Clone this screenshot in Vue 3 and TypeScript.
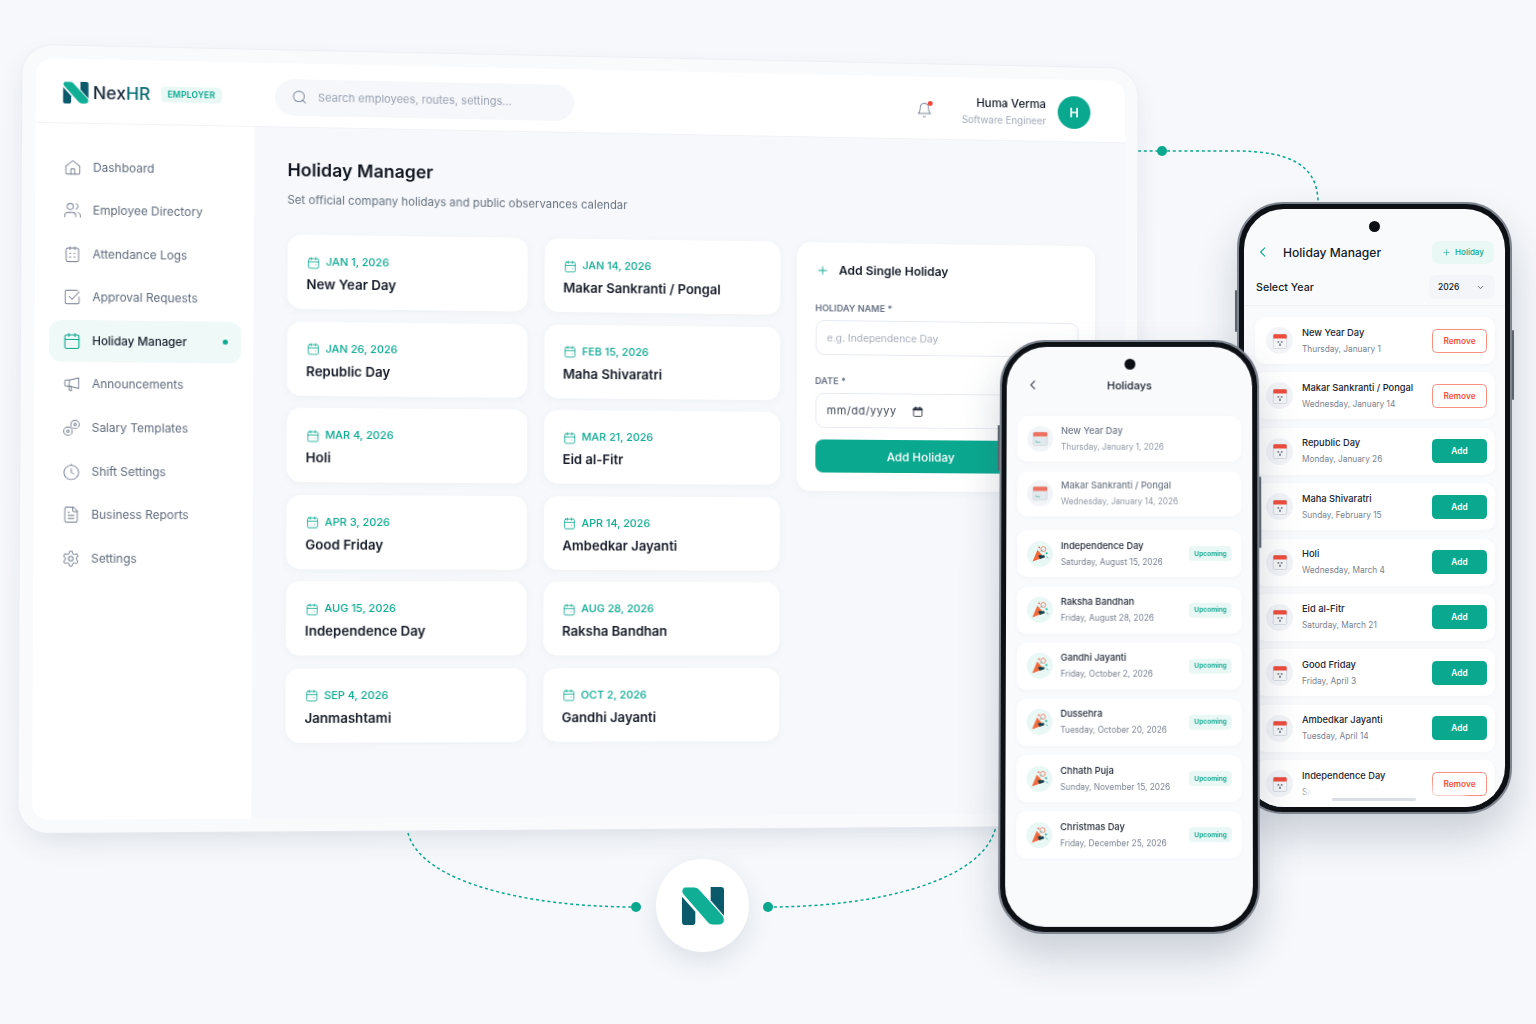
<template>
  <div class="canvas">
    <!-- dashed connectors sit under everything -->
    <svg class="links" width="1536" height="1024" viewBox="0 0 1536 1024" fill="none">
      <path class="dash" d="M1138 151H1235C1290 151 1318 165 1318 203" />
      <path class="dash" d="M408 833C420 880 520 907 636 907" />
      <path class="dash" d="M768 907C880 907 985 880 996 826" />
      <circle cx="1162" cy="151" r="5" fill="#0aa88f" />
      <circle cx="636" cy="907" r="5" fill="#0aa88f" />
      <circle cx="768" cy="907" r="5" fill="#0aa88f" />
    </svg>

    <div class="desk" :style="{ transform: deskMatrix }">
      <header class="topbar">
        <div class="brand">
          <svg class="logo" viewBox="0 0 41 37">
            <path d="M0 9.5 13 24V34a3 3 0 0 1-3 3H3a3 3 0 0 1-3-3Z" fill="#0a5a6b" />
            <path d="M28 0h10a3 3 0 0 1 3 3V28L28 13Z" fill="#0a5a6b" />
            <path d="M3 0H12Q15 0 17 2.500L40 28Q42 31 41 34 39.500 37 36 37H30Q27 37 25 34.500L1 7Q-1 4.500 .5 2 1.500 0 3 0Z" fill="#0fae95" stroke="#fff" stroke-width=".8" />
          </svg>
          <span class="brand-name">Nex<b>HR</b></span>
          <span class="role">EMPLOYER</span>
        </div>
        <div class="search">
          <svg class="ico" viewBox="0 0 24 24" v-html="icons.search" />
          <span>Search employees, routes, settings...</span>
        </div>
        <div class="spacer" />
        <div class="bell">
          <svg class="ico" viewBox="0 0 24 24" v-html="icons.bell" />
          <i />
        </div>
        <div class="who">
          <strong>Huma Verma</strong>
          <small>Software Engineer</small>
        </div>
        <div class="avatar">H</div>
      </header>

      <div class="body">
        <nav class="side">
          <a v-for="item in nav" :key="item.label" class="nav-item" :class="{ on: item.active }">
            <svg class="ico" viewBox="0 0 24 24" v-html="icons[item.icon]" />
            <span>{{ item.label }}</span>
            <i v-if="item.active" />
          </a>
        </nav>

        <main class="main">
          <h1>Holiday Manager</h1>
          <p class="sub">Set official company holidays and public observances calendar</p>
          <div class="columns">
            <div class="cards">
              <div v-for="card in cards" :key="card.name" class="card">
                <div class="when">
                  <svg class="ico" viewBox="0 0 24 24" v-html="icons.calendarDot" />
                  {{ card.date }}
                </div>
                <div class="name">{{ card.name }}</div>
              </div>
            </div>
            <section class="form">
              <h2>
                <svg class="ico" viewBox="0 0 24 24" v-html="icons.plus" />
                Add Single Holiday
              </h2>
              <label>HOLIDAY NAME *</label>
              <div class="field ghost">e.g. Independence Day</div>
              <label class="second">DATE *</label>
              <div class="field date">
                mm/dd/yyyy
                <svg viewBox="0 0 24 24" class="ico" v-html="icons.calendarFill" />
              </div>
              <button class="submit">Add Holiday</button>
            </section>
          </div>
        </main>
      </div>
    </div>

    <!-- back phone: manager -->
    <div class="phone p2">
      <span class="key k1" /><span class="key k2" />
      <div class="screen">
        <span class="cam" />
        <div class="p2-head">
          <svg class="ico back" viewBox="0 0 24 24"><path d="m15 5-7 7 7 7" /></svg>
          <span class="p-title">Holiday Manager</span>
          <span class="add-chip">
            <svg class="ico" viewBox="0 0 24 24" v-html="icons.plus" />
            Holiday
          </span>
        </div>
        <div class="year-row">
          <span>Select Year</span>
          <span class="year">2026
            <svg class="ico" viewBox="0 0 24 24"><path d="m6 9 6 6 6-6" /></svg>
          </span>
        </div>
        <div class="p2-list">
          <div v-for="row in managerRows" :key="row.name" class="row">
            <span class="bubble grey">
              <svg viewBox="0 0 24 24" class="emoji">
                <rect x="4" y="4" width="16" height="17" rx="1.500" fill="#f4f5f6" stroke="#c9ced4" stroke-width=".8" />
                <path d="M4 9V5.500A1.500 1.500 0 0 1 5.500 4h13A1.500 1.500 0 0 1 20 5.500V9Z" fill="#ee4b3a" />
                <path d="M9 12h2v2H9zm4 0h2v2h-2zm-2 3h2v3h-2z" fill="#7d8792" />
              </svg>
            </span>
            <span class="txt">
              <b>{{ row.name }}</b>
              <small>{{ row.date }}</small>
            </span>
            <button :class="row.added ? 'btn-remove' : 'btn-add'">{{ row.added ? 'Remove' : 'Add' }}</button>
          </div>
        </div>
        <span class="fade" />
        <span class="fade low" />
        <span class="home-bar" />
      </div>
    </div>

    <!-- front phone: employee list -->
    <div class="phone p1" :style="{ transform: phoneMatrix }">
      <span class="key k3" /><span class="key k4" />
      <div class="screen">
        <span class="cam" />
        <div class="p1-head">
          <svg class="ico back" viewBox="0 0 24 24"><path d="m15 5-7 7 7 7" /></svg>
          Holidays
        </div>
        <div class="p1-list">
          <div v-for="row in employeeRows" :key="row.name" class="row" :class="{ past: row.past }">
            <span class="bubble" :class="row.past ? 'grey' : 'mint'">
              <svg v-if="row.past" viewBox="0 0 24 24" class="emoji">
                <rect x="3.500" y="4" width="17" height="16" rx="1.500" fill="#dfe8ec" stroke="#c6d0d6" stroke-width=".8" />
                <path d="M3.500 9V5.500A1.500 1.500 0 0 1 5 4h14a1.500 1.500 0 0 1 1.500 1.500V9Z" fill="#ee5a46" />
                <path d="M7 14v2h5" fill="none" stroke="#4fb3a2" stroke-width="1" />
              </svg>
              <svg v-else viewBox="0 0 24 24" class="emoji">
                <path d="M3 21 9 7l8 9Z" fill="#f2693c" />
                <path d="M10 14c3-2 4 1 7-1l1 3-6 2Z" fill="#12404f" />
                <circle cx="16" cy="6" r="3" fill="none" stroke="#ef8a78" stroke-width="1.200" />
                <circle cx="20" cy="11" r="1.200" fill="#0fae95" />
                <circle cx="11" cy="4" r="1" fill="#ee4b3a" />
                <path d="M20 15l2 2M13 9l2-2" stroke="#0fae95" stroke-width="1" />
              </svg>
            </span>
            <span class="txt">
              <b>{{ row.name }}</b>
              <small>{{ row.date }}</small>
            </span>
            <span v-if="!row.past" class="soon">Upcoming</span>
          </div>
        </div>
      </div>
    </div>

    <div class="badge">
      <svg viewBox="0 0 41 37">
        <path d="M0 9.500 13 24V34a3 3 0 0 1-3 3H3a3 3 0 0 1-3-3Z" fill="#0a5a6b" />
        <path d="M28 0h10a3 3 0 0 1 3 3V28L28 13Z" fill="#0a5a6b" />
        <path d="M3 0H12Q15 0 17 2.500L40 28Q42 31 41 34 39.500 37 36 37H30Q27 37 25 34.500L1 7Q-1 4.500 .5 2 1.500 0 3 0Z" fill="#0fae95" stroke="#fff" stroke-width=".8" />
      </svg>
    </div>
  </div>
</template>

<script setup lang="ts">
type Pt = [number, number];

// css matrix for a w x h box whose corners land on the four points (tl, tr, br, bl)
function warp(w: number, h: number, q: Pt[]): string {
  const [[x0, y0], [x1, y1], [x2, y2], [x3, y3]] = q;
  const dx1 = x1 - x2, dx2 = x3 - x2, sx = x0 - x1 + x2 - x3;
  const dy1 = y1 - y2, dy2 = y3 - y2, sy = y0 - y1 + y2 - y3;
  const den = dx1 * dy2 - dx2 * dy1;
  const g = (sx * dy2 - dx2 * sy) / den;
  const k = (dx1 * sy - sx * dy1) / den;
  const a = x1 - x0 + g * x1, b = x3 - x0 + k * x3;
  const d = y1 - y0 + g * y1, e = y3 - y0 + k * y3;
  return `matrix3d(${a / w},${d / w},0,${g / w},${b / h},${e / h},0,${k / h},0,0,1,0,${x0},${y0},0,1)`;
}

const deskMatrix = warp(1090, 762, [[36, 58], [1125, 81], [1124, 813], [32, 820]]);
const phoneMatrix = warp(262, 595, [[1000, 340], [1259, 340], [1260, 934], [998, 934]]);

const icons: Record<string, string> = {
  search: '<circle cx="11" cy="11" r="8"/><path d="m21 21-4.300-4.300"/>',
  bell: '<path d="M6 8a6 6 0 0 1 12 0c0 7 3 9 3 9H3s3-2 3-9"/><path d="M10.300 21a1.940 1.940 0 0 0 3.400 0"/>',
  plus: '<path d="M5 12h14M12 5v14"/>',
  home: '<path d="M3 10.500 12 3l9 7.500V19a2 2 0 0 1-2 2H5a2 2 0 0 1-2-2Z"/><path d="M9.500 21v-6a1 1 0 0 1 1-1h3a1 1 0 0 1 1 1v6"/>',
  users: '<path d="M16 21v-2a4 4 0 0 0-4-4H6a4 4 0 0 0-4 4v2"/><circle cx="9" cy="7" r="4"/><path d="M22 21v-2a4 4 0 0 0-3-3.870"/><path d="M16 3.130a4 4 0 0 1 0 7.750"/>',
  sheet: '<rect x="4" y="4" width="16" height="18" rx="2"/><path d="M9 2v4M15 2v4M8.500 11h1.500M14 11h1.500M8.500 16h1.500M14 16h1.500"/>',
  approve: '<path d="M21 11.500V19a2 2 0 0 1-2 2H5a2 2 0 0 1-2-2V5a2 2 0 0 1 2-2h14"/><path d="m8 11 4 4 9-10"/>',
  calendar: '<rect x="3" y="4" width="18" height="18" rx="2"/><path d="M16 2v4M8 2v4M3 10h18"/>',
  calendarDot: '<rect x="3" y="4" width="18" height="18" rx="2"/><path d="M16 2v4M8 2v4M3 10h18M16 16h.01"/>',
  calendarFill: '<rect x="4" y="5" width="16" height="16" rx="2"/><path d="M8 3v4M16 3v4"/><path d="M4 9h16V7H4Z" fill="currentColor"/>',
  megaphone: '<path d="M21 4v14L9 15H5a2 2 0 0 1-2-2V9a2 2 0 0 1 2-2h4Z"/><path d="M9 7v8M8 15l1 6h3l-1-5.500"/>',
  salary: '<circle cx="7.500" cy="16.500" r="5.500"/><circle cx="7.500" cy="16.500" r="1.500"/><circle cx="16.500" cy="7.500" r="5.500"/><circle cx="16.500" cy="7.500" r="1.500"/>',
  clock: '<circle cx="12" cy="13" r="9.500"/><path d="M12 1.500v2M12 7.500V13l3.500 2"/>',
  report: '<path d="M15 2H6a2 2 0 0 0-2 2v16a2 2 0 0 0 2 2h12a2 2 0 0 0 2-2V7Z"/><path d="M14 2v4a2 2 0 0 0 2 2h4"/><path d="M8 13h8M8 17h8M8 9h2"/>',
  settings: '<path d="M12.220 2h-.440a2 2 0 0 0-2 2v.180a2 2 0 0 1-1 1.730l-.430.250a2 2 0 0 1-2 0l-.150-.080a2 2 0 0 0-2.730.730l-.220.380a2 2 0 0 0 .730 2.730l.150.100a2 2 0 0 1 1 1.720v.510a2 2 0 0 1-1 1.740l-.150.090a2 2 0 0 0-.730 2.730l.220.380a2 2 0 0 0 2.730.730l.150-.080a2 2 0 0 1 2 0l.430.250a2 2 0 0 1 1 1.730V20a2 2 0 0 0 2 2h.440a2 2 0 0 0 2-2v-.180a2 2 0 0 1 1-1.730l.430-.250a2 2 0 0 1 2 0l.150.080a2 2 0 0 0 2.730-.730l.220-.390a2 2 0 0 0-.730-2.730l-.150-.080a2 2 0 0 1-1-1.740v-.500a2 2 0 0 1 1-1.740l.150-.090a2 2 0 0 0 .730-2.730l-.220-.380a2 2 0 0 0-2.730-.730l-.150.080a2 2 0 0 1-2 0l-.430-.250a2 2 0 0 1-1-1.730V4a2 2 0 0 0-2-2z"/><circle cx="12" cy="12" r="3"/>',
};

const nav = [
  { label: 'Dashboard', icon: 'home' },
  { label: 'Employee Directory', icon: 'users' },
  { label: 'Attendance Logs', icon: 'sheet' },
  { label: 'Approval Requests', icon: 'approve' },
  { label: 'Holiday Manager', icon: 'calendar', active: true },
  { label: 'Announcements', icon: 'megaphone' },
  { label: 'Salary Templates', icon: 'salary' },
  { label: 'Shift Settings', icon: 'clock' },
  { label: 'Business Reports', icon: 'report' },
  { label: 'Settings', icon: 'settings' },
];

const cards = [
  { date: 'JAN 1, 2026', name: 'New Year Day' },
  { date: 'JAN 14, 2026', name: 'Makar Sankranti / Pongal' },
  { date: 'JAN 26, 2026', name: 'Republic Day' },
  { date: 'FEB 15, 2026', name: 'Maha Shivaratri' },
  { date: 'MAR 4, 2026', name: 'Holi' },
  { date: 'MAR 21, 2026', name: 'Eid al-Fitr' },
  { date: 'APR 3, 2026', name: 'Good Friday' },
  { date: 'APR 14, 2026', name: 'Ambedkar Jayanti' },
  { date: 'AUG 15, 2026', name: 'Independence Day' },
  { date: 'AUG 28, 2026', name: 'Raksha Bandhan' },
  { date: 'SEP 4, 2026', name: 'Janmashtami' },
  { date: 'OCT 2, 2026', name: 'Gandhi Jayanti' },
];

const employeeRows = [
  { name: 'New Year Day', date: 'Thursday, January 1, 2026', past: true },
  { name: 'Makar Sankranti / Pongal', date: 'Wednesday, January 14, 2026', past: true },
  { name: 'Independence Day', date: 'Saturday, August 15, 2026' },
  { name: 'Raksha Bandhan', date: 'Friday, August 28, 2026' },
  { name: 'Gandhi Jayanti', date: 'Friday, October 2, 2026' },
  { name: 'Dussehra', date: 'Tuesday, October 20, 2026' },
  { name: 'Chhath Puja', date: 'Sunday, November 15, 2026' },
  { name: 'Christmas Day', date: 'Friday, December 25, 2026' },
];

const managerRows = [
  { name: 'New Year Day', date: 'Thursday, January 1', added: true },
  { name: 'Makar Sankranti / Pongal', date: 'Wednesday, January 14', added: true },
  { name: 'Republic Day', date: 'Monday, January 26' },
  { name: 'Maha Shivaratri', date: 'Sunday, February 15' },
  { name: 'Holi', date: 'Wednesday, March 4' },
  { name: 'Eid al-Fitr', date: 'Saturday, March 21' },
  { name: 'Good Friday', date: 'Friday, April 3' },
  { name: 'Ambedkar Jayanti', date: 'Tuesday, April 14' },
  { name: 'Independence Day', date: 'Saturday, August 15', added: true },
];
</script>

<style>
*, *::before, *::after {
  box-sizing: border-box;
}
</style>

<style scoped>
.canvas {
  position: relative;
  width: 1536px;
  height: 1024px;
  overflow: hidden;
  background: #f6f8fb;
  font-family: Inter, "Noto Sans", sans-serif;
  color: #141b27;
}

.links {
  position: absolute;
  left: 0;
  top: 0;
}

.dash {
  stroke: #0aa88f;
  stroke-width: 1.5;
  stroke-dasharray: 3 2.800;
}

.ico {
  fill: none;
  stroke: currentColor;
  stroke-width: 1.5;
  stroke-linecap: round;
  stroke-linejoin: round;
  flex: none;
}

/* desktop window, warped onto its corners from the script */
.desk {
  position: absolute;
  left: 0;
  top: 0;
  width: 1090px;
  height: 762px;
  transform-origin: 0 0;
  display: flex;
  flex-direction: column;
  background: #f6f8fb;
  border-radius: 16px;
  overflow: hidden;
  box-shadow: 0 0 0 13px #f9fafc, 0 0 0 14px rgba(232, 235, 241, 0.6), 0 12px 30px 6px rgba(60, 75, 100, 0.16);
}

.topbar {
  flex: none;
  height: 65px;
  display: flex;
  align-items: center;
  padding: 4px 36px 0 26px;
  background: #fff;
  border-bottom: 1px solid #f0f2f6;
}

.brand {
  display: flex;
  align-items: center;
  width: 206px;
}

.logo {
  width: 25px;
  height: 22px;
}

.brand-name {
  margin-left: 4px;
  font-size: 17px;
  font-weight: 500;
  color: #1a2a3a;
}

.brand-name b {
  font-weight: 500;
  color: #0b6a72;
}

.role {
  margin-left: 10px;
  padding: 3px 6.500px;
  border-radius: 4px;
  background: #eaf8f5;
  color: #0aa88f;
  font-size: 8.300px;
  font-weight: 600;
  letter-spacing: 0.2px;
}

.search {
  width: 296px;
  height: 37px;
  display: flex;
  align-items: center;
  gap: 10px;
  padding-left: 16px;
  border-radius: 19px;
  background: #f5f7fa;
  color: #9aa3b1;
  font-size: 11px;
}

.search .ico {
  width: 16px;
  height: 16px;
  color: #6f7a8a;
  stroke-width: 1.3;
}

.spacer {
  flex: 1;
}

.bell {
  position: relative;
  width: 17px;
  height: 17px;
  margin-right: 30px;
  color: #7a8494;
}

.bell .ico {
  width: 17px;
  height: 17px;
  stroke-width: 1.3;
}

.bell i {
  position: absolute;
  top: -1px;
  right: 0;
  width: 5px;
  height: 5px;
  border-radius: 50%;
  background: #f04438;
}

.who {
  display: flex;
  flex-direction: column;
  align-items: flex-end;
  gap: 3px;
  margin-right: 12px;
}

.who strong {
  font-size: 11.700px;
  font-weight: 500;
  line-height: 15px;
}

.who small {
  font-size: 10px;
  line-height: 13px;
  color: #a1a9b6;
}

.avatar {
  width: 34px;
  height: 34px;
  display: flex;
  align-items: center;
  justify-content: center;
  border-radius: 50%;
  background: #0aa88f;
  color: #fff;
  font-size: 13px;
  font-weight: 600;
}

.body {
  flex: 1;
  display: flex;
  min-height: 0;
}

.side {
  flex: none;
  width: 212px;
  padding: 22.500px 12px 0 14px;
  background: #fff;
  display: flex;
  flex-direction: column;
  gap: 1.600px;
}

.nav-item {
  height: 42px;
  display: flex;
  align-items: center;
  gap: 11px;
  padding: 0 12px 0 12.500px;
  border-radius: 12px;
  color: #5f6b7c;
  font-size: 11.500px;
}

.nav-item .ico {
  width: 18px;
  height: 18px;
  stroke-width: 1.150;
  color: #707b8c;
}

.nav-item.on {
  background: #eff9f7;
  color: #161e2b;
  font-size: 11.300px;
  font-weight: 500;
}

.nav-item.on .ico {
  color: #0aa88f;
  stroke-width: 1.4;
}

.nav-item i {
  width: 5px;
  height: 5px;
  margin-left: auto;
  margin-right: 1px;
  border-radius: 50%;
  background: #0aa88f;
}

.main {
  flex: 1;
  padding: 30px 31px 0 32.500px;
}

h1 {
  margin: 0;
  font-size: 17.500px;
  line-height: 26px;
  font-weight: 600;
  color: #10161f;
}

.sub {
  margin: 7.500px 0 0;
  font-size: 11.300px;
  line-height: 19px;
  color: #68737f;
}

.columns {
  margin-top: 25.500px;
  display: grid;
  grid-template-columns: 491px 306px;
  column-gap: 17px;
  align-items: start;
}

.cards {
  display: grid;
  grid-template-columns: 237px 237px;
  gap: 12.600px 17px;
}

.card {
  height: 75px;
  padding: 20px 0 0 19px;
  border-radius: 14px;
  background: #fff;
  box-shadow: 0 2px 8px rgba(90, 110, 140, 0.05);
}

.when {
  display: flex;
  align-items: center;
  gap: 6px;
  color: #0aa88f;
  font-size: 10.800px;
  font-weight: 500;
  line-height: 16px;
}

.when .ico {
  width: 13px;
  height: 13px;
}

.name {
  margin-top: 4px;
  font-size: 13.100px;
  line-height: 20px;
  font-weight: 600;
  color: #141a26;
}

.form {
  height: 256px;
  padding: 19px 17px 0 19px;
  border-radius: 14px;
  background: #fff;
  box-shadow: 0 2px 8px rgba(90, 110, 140, 0.05);
}

h2 {
  margin: 0 0 23px;
  display: flex;
  align-items: center;
  gap: 10px;
  font-size: 12.300px;
  line-height: 20px;
  font-weight: 600;
}

h2 .ico {
  width: 14px;
  height: 14px;
  color: #0aa88f;
}

label {
  display: block;
  font-size: 9.300px;
  line-height: 12px;
  font-weight: 600;
  color: #687283;
}

label.second {
  margin-top: 21px;
}

.field {
  height: 36px;
  margin-top: 6px;
  display: flex;
  align-items: center;
  padding: 0 11px;
  border: 1px solid #e6eaf0;
  border-radius: 9px;
  font-size: 10.400px;
}

.ghost {
  color: #a6adb9;
}

.date {
  gap: 15px;
  color: #3f4957;
  font-size: 11px;
  letter-spacing: 0.6px;
}

.date .ico {
  width: 13px;
  height: 13px;
  color: #1b2330;
}

.submit {
  width: 216px;
  height: 34px;
  margin-top: 12px;
  display: block;
  border: 0;
  border-radius: 8px;
  background: #0aa88f;
  color: #fff;
  font: 500 12px Inter, sans-serif;
}

/* phones */
.phone {
  position: absolute;
  padding: 5px;
  background: #0d1015;
  border: 2px solid #80868f;
  border-radius: 46px;
  box-shadow: 0 22px 40px rgba(50, 65, 90, 0.22);
}

.p1 {
  left: 0;
  top: 0;
  width: 262px;
  height: 595px;
  transform-origin: 0 0;
}

.p2 {
  left: 1237px;
  top: 202px;
  width: 275px;
  height: 612px;
}

.screen {
  position: relative;
  height: 100%;
  overflow: hidden;
  border-radius: 40px;
  background: #f9fafc;
}

.cam {
  position: absolute;
  left: 50%;
  top: 12px;
  width: 11px;
  height: 11px;
  margin-left: -5.500px;
  border-radius: 50%;
  background: #0c0f14;
}

.key {
  position: absolute;
  width: 2px;
  background: #5d636c;
  border-radius: 1px;
}

.k1 {
  left: -4px;
  top: 86px;
  height: 42px;
}

.k2 {
  right: -4px;
  top: 126px;
  height: 70px;
}

.k3 {
  left: -4px;
  top: 84px;
  height: 46px;
}

.k4 {
  right: -4px;
  top: 136px;
  height: 72px;
}

.back {
  width: 13px;
  height: 13px;
}

.p-title {
  font-size: 12.100px;
  font-weight: 500;
}

.p1-head {
  position: relative;
  height: 70px;
  padding-top: 29px;
  text-align: center;
  font-size: 11px;
  line-height: 20px;
  font-weight: 500;
}

.p1-head .back {
  position: absolute;
  left: 20px;
  top: 32px;
  stroke-width: 1.900;
  color: #141b27;
}

.p1-list {
  padding: 0 11px;
  display: flex;
  flex-direction: column;
  gap: 9.200px;
}

.row {
  height: 47px;
  display: flex;
  align-items: center;
  flex: none;
  border-radius: 10px;
  background: #fff;
  box-shadow: 0 1px 4px rgba(90, 110, 140, 0.04);
}

.bubble {
  width: 26px;
  height: 26px;
  flex: none;
  display: flex;
  align-items: center;
  justify-content: center;
  margin: 0 8px 0 10px;
  border-radius: 50%;
}

.bubble.grey {
  background: #f2f4f7;
}

.bubble.mint {
  background: #e9f7f5;
}

.emoji {
  width: 20px;
  height: 20px;
}

.txt {
  flex: 1;
  min-width: 0;
  display: flex;
  flex-direction: column;
  gap: 4px;
}

.txt b {
  font-size: 9.300px;
  line-height: 12px;
  font-weight: 500;
  color: #1d2532;
  white-space: nowrap;
}

.txt small {
  font-size: 8.300px;
  line-height: 12px;
  color: #79828f;
  white-space: nowrap;
}

.p1-list .past {
  height: 45.500px;
  margin-bottom: 1px;
}

.p1-list .past .txt b {
  color: #717a87;
}

.p1-list .past .txt small {
  color: #9098a4;
}

.p1-list .past .emoji {
  opacity: 0.85;
}

.p1-list .past + .row:not(.past) {
  margin-top: 4px;
}

.soon {
  margin-right: 10px;
  padding: 3.500px 5px;
  border-radius: 4px;
  background: #e9f7f5;
  color: #0aa88f;
  font-size: 6.600px;
  font-weight: 600;
  line-height: 8px;
}

.p2-head {
  height: 64px;
  padding: 22px 11px 0 12px;
  display: flex;
  align-items: center;
}

.p2-head .back {
  color: #0aa88f;
  margin-right: 13px;
  width: 14px;
  height: 14px;
  stroke-width: 1.900;
}

.add-chip {
  margin-left: auto;
  width: 62px;
  height: 23px;
  display: flex;
  align-items: center;
  justify-content: center;
  gap: 4px;
  border-radius: 7px;
  background: #e9f8f5;
  color: #0aa88f;
  font-size: 8px;
  font-weight: 500;
}

.add-chip .ico {
  width: 9px;
  height: 9px;
}

.year-row {
  height: 33px;
  display: flex;
  align-items: center;
  justify-content: space-between;
  padding: 0 10px 4px 12px;
  border-bottom: 1px solid #eef0f4;
  font-size: 10.700px;
  font-weight: 500;
}

.year {
  width: 66px;
  height: 24px;
  display: flex;
  align-items: center;
  justify-content: space-between;
  padding: 0 10px 0 9px;
  border-radius: 7px;
  background: #f3f5f8;
  font-size: 8.500px;
}

.year .ico {
  width: 9px;
  height: 9px;
}

.p2-list {
  padding: 11px 10px 0 11px;
  display: flex;
  flex-direction: column;
  gap: 8.400px;
}

.p2-list .bubble {
  width: 27px;
  height: 27px;
  margin: 0 9px 0 11px;
}

.p2-list button {
  width: 55px;
  height: 24px;
  flex: none;
  margin-right: 8px;
  border-radius: 4.500px;
  font: 600 8.300px Inter, sans-serif;
}

.btn-add {
  border: 0;
  background: #0aa88f;
  color: #fff;
}

.btn-remove {
  border: 1px solid #f88f80;
  background: #fff;
  color: #f4533c;
}

.fade {
  position: absolute;
  left: 62px;
  right: 73px;
  bottom: -6px;
  height: 29px;
  background: #fff;
  filter: blur(3px);
}

.fade.low {
  left: 180px;
  right: 40px;
  height: 18px;
  filter: blur(2px);
}

.home-bar {
  position: absolute;
  left: 88px;
  bottom: 6px;
  width: 84px;
  height: 3px;
  border-radius: 2px;
  background: #dcdfe4;
}

.badge {
  position: absolute;
  left: 656px;
  top: 859px;
  width: 93px;
  height: 93px;
  display: flex;
  align-items: center;
  justify-content: center;
  border-radius: 50%;
  background: #fff;
  box-shadow: 0 10px 26px rgba(70, 90, 120, 0.14);
}

.badge svg {
  width: 42px;
  height: 38px;
}
</style>
